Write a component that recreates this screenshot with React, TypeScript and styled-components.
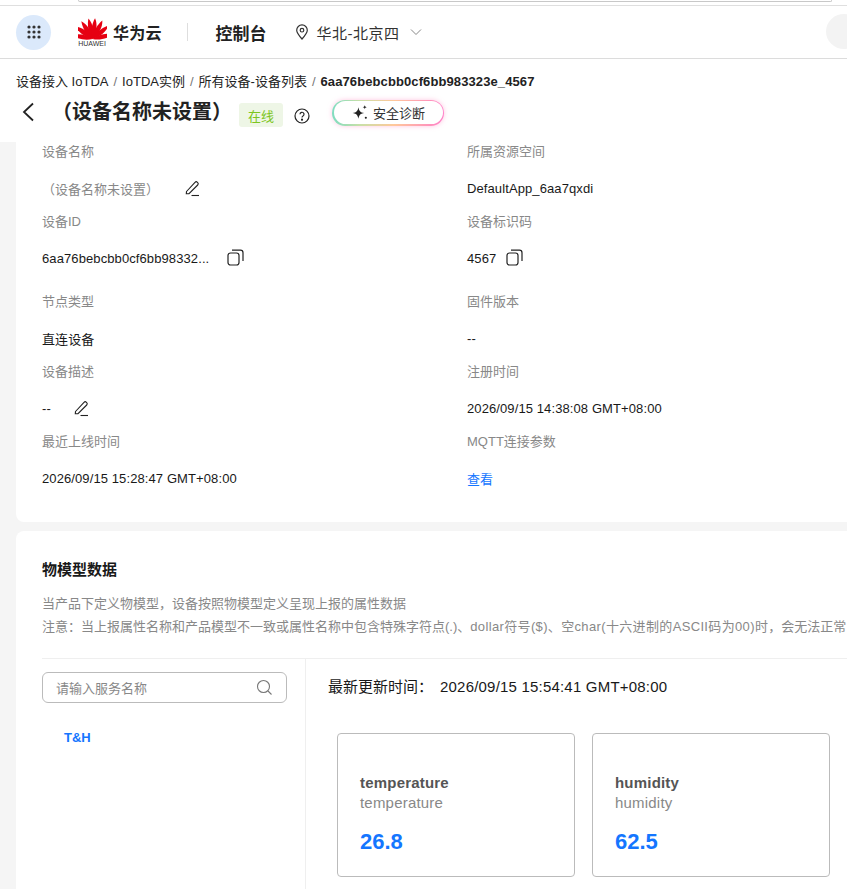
import React from "react";
import styled, { createGlobalStyle } from "styled-components";

const Global = createGlobalStyle`
  html, body { margin: 0; padding: 0; background: #fff; }
  body { font-family: "Liberation Sans", "Noto Sans CJK SC", sans-serif; color: #191919; }
  * { box-sizing: border-box; }
`;

const Page = styled.div`
  width: 847px;
  height: 889px;
  overflow: hidden;
  background: #f5f5f5;
  display: flex;
  flex-direction: column;
`;
const TopStrip = styled.div`
  height: 6px;
  flex: none;
  background: #fff;
  border-bottom: 1px solid #dfdfdf;
  padding-left: 78px;
  padding-right: 15px;
`;
const AddressEdge = styled.div`
  height: 2px;
  border: 1px solid #c8c8c8;
  border-top: none;
  border-radius: 0 0 5px 5px;
`;
const Header = styled.header`
  height: 53px;
  flex: none;
  background: #fff;
  border-bottom: 1px solid #dcdcdc;
  display: flex;
  align-items: center;
  padding-left: 16px;
  position: relative;
`;
const GridButton = styled.div`
  width: 35px;
  height: 35px;
  border-radius: 50%;
  background: #dbe9fb;
  display: flex;
  align-items: center;
  justify-content: center;
`;
const Logo = styled.div`
  margin-left: 26px;
  width: 30px;
  height: 32px;
  display: flex;
  flex-direction: column;
  align-items: center;
`;
const LogoWord = styled.span`
  font-size: 7px;
  line-height: 7px;
  color: #333;
  white-space: nowrap;
`;
const Brand = styled.span`
  margin-left: 6px;
  font-size: 16px;
  font-weight: 700;
  color: #222;
  letter-spacing: 0.2px;
`;
const HeaderDivider = styled.div`
  width: 1px;
  height: 18px;
  background: #dedede;
  margin-left: 25px;
`;
const Console = styled.span`
  margin-left: 28px;
  font-size: 17px;
  font-weight: 700;
  color: #222;
`;
const Region = styled.div`
  margin-left: 28px;
  display: flex;
  align-items: center;
  font-size: 15px;
  letter-spacing: 0.5px;
  color: #333;
`;
const RegionText = styled.span`
  margin-left: 8px;
  margin-right: 10px;
`;
const Avatar = styled.div`
  position: absolute;
  left: 826px;
  top: 8px;
  width: 36px;
  height: 35px;
  border-radius: 50%;
  background: #f3f3f3;
`;
const TitleArea = styled.div`
  height: 83px;
  flex: none;
  background: #fff;
  padding: 14px 16px 0;
`;
const Breadcrumb = styled.div`
  font-size: 13px;
  line-height: 18px;
  height: 18px;
  white-space: nowrap;
  color: #222;
`;
const Sep = styled.span`
  color: #777;
  margin: 0 5px;
`;
const CrumbStrong = styled.span`
  font-weight: 700;
  letter-spacing: 0.1px;
`;
const TitleRow = styled.div`
  display: flex;
  align-items: center;
  height: 32px;
  margin-top: 5px;
`;
const BackButton = styled.div`
  width: 30px;
  height: 24px;
  padding-left: 5px;
  display: flex;
  align-items: center;
`;
const Title = styled.h1`
  margin: 0 0 0 6px;
  font-size: 20px;
  line-height: 28px;
  font-weight: 700;
  color: #222;
  white-space: nowrap;
`;
const Badge = styled.span`
  margin-left: 7px;
  margin-top: 6px;
  width: 44px;
  height: 24px;
  border-radius: 3px;
  background: #eef6e6;
  color: #7cc520;
  font-size: 13px;
  display: flex;
  align-items: center;
  justify-content: center;
`;
const Help = styled.div`
  margin-left: 11px;
  margin-top: 7px;
  display: flex;
`;
const Glow = styled.div`
  margin-left: 22px;
  width: 112px;
  height: 26px;
  margin-top: 1px;
  border-radius: 13px;
  padding: 1.5px;
  background: linear-gradient(90deg, #7fdcc0 0%, #c8e0a8 25%, #ffc89a 55%, #ff7fc8 100%);
  box-shadow: 0 0 5px rgba(255, 150, 200, 0.55);
`;
const GlowInner = styled.div`
  width: 100%;
  height: 100%;
  background: #fff;
  border-radius: 12px;
  display: flex;
  align-items: center;
  justify-content: center;
  gap: 4px;
  font-size: 13px;
  color: #333;
`;
const Content = styled.main`
  flex: 1;
  padding-left: 16px;
  display: flex;
  flex-direction: column;
  gap: 9px;
  min-height: 0;
`;
const InfoCard = styled.section`
  width: 900px;
  height: 380px;
  flex: none;
  background: #fff;
  border-radius: 0 0 0 8px;
  padding: 1px 0 0 26px;
  display: grid;
  grid-template-columns: 425px 425px;
  grid-template-rows: 70px 80px 70px 70px 70px;
  align-content: start;
`;
const Field = styled.div`
  display: flex;
  flex-direction: column;
`;
const Label = styled.div`
  font-size: 13px;
  line-height: 18px;
  color: #888;
`;
const ValueRow = styled.div`
  margin-top: 18px;
  height: 18px;
  display: flex;
  align-items: center;
  font-size: 13px;
  letter-spacing: 0.1px;
  color: #191919;
  white-space: nowrap;
`;
const Muted = styled.span`
  color: #888;
  font-size: 13px;
  letter-spacing: 0;
`;
const IconSlot = styled.span<{ $gap: number; $lift: number }>`
  margin-left: ${(p) => p.$gap}px;
  margin-top: ${(p) => -p.$lift}px;
  display: inline-flex;
`;
const LinkText = styled.span`
  color: #1476ff;
  font-size: 13px;
`;
const ModelCard = styled.section`
  width: 900px;
  flex: 1;
  background: #fff;
  border-radius: 8px 0 0 0;
  padding: 29px 0 0 26px;
  display: flex;
  flex-direction: column;
  min-height: 0;
`;
const SectionTitle = styled.h2`
  margin: 0;
  font-size: 15px;
  line-height: 20px;
  font-weight: 700;
  color: #191919;
`;
const Desc = styled.p<{ $top: number }>`
  margin: ${(p) => p.$top}px 0 0;
  font-size: 13px;
  line-height: 18px;
  color: #888;
  white-space: nowrap;
`;
const DescWide = styled.span`
  letter-spacing: 0.35px;
`;
const ModelBody = styled.div`
  margin-top: 22px;
  border-top: 1px solid #efefef;
  display: flex;
  flex: 1;
  min-height: 0;
`;
const SideColumn = styled.aside`
  width: 264px;
  flex: none;
  border-right: 1px solid #efefef;
  padding-top: 13px;
`;
const SearchBox = styled.div`
  width: 245px;
  height: 31px;
  border: 1px solid #bbb;
  border-radius: 6px;
  padding: 0 13px;
  display: flex;
  align-items: center;
  justify-content: space-between;
  font-size: 13px;
  color: #888;
`;
const ServiceItem = styled.div`
  margin: 26px 0 0 22px;
  font-size: 13px;
  line-height: 18px;
  font-weight: 700;
  color: #1476ff;
`;
const MainColumn = styled.div`
  flex: 1;
  padding: 18px 0 0 22px;
`;
const UpdateLine = styled.div`
  display: flex;
  gap: 7px;
  font-size: 15px;
  line-height: 20px;
  color: #191919;
  white-space: nowrap;
`;
const UpdateDate = styled.span`
  letter-spacing: 0.2px;
`;
const MetricRow = styled.div`
  display: flex;
  gap: 17px;
  margin: 36px 0 0 9px;
`;
const Metric = styled.div`
  width: 238px;
  height: 144px;
  border: 1px solid #bbb;
  border-radius: 4px;
  padding: 39px 0 0 22px;
`;
const MetricName = styled.div`
  font-size: 15px;
  line-height: 20px;
  font-weight: 700;
  letter-spacing: 0.2px;
  color: #555;
`;
const MetricSub = styled.div`
  font-size: 15px;
  line-height: 20px;
  letter-spacing: 0.2px;
  color: #888;
`;
const MetricValue = styled.div`
  margin-top: 14px;
  font-size: 22px;
  line-height: 30px;
  font-weight: 700;
  color: #1476ff;
`;

const Pencil = () => (
  <svg width="17" height="17" viewBox="0 0 17 17" fill="none" stroke="#222" strokeWidth="1.1">
    <path d="M2.500 11.500 11 2.300a1.700 1.700 0 0 1 2.400 0l.3.300a1.700 1.700 0 0 1 0 2.400L5 13.700H2.300z" />
    <path d="M7.500 15.500h7.500" />
  </svg>
);
const Copy = () => (
  <svg width="17" height="17" viewBox="0 0 17 17" fill="none" stroke="#222" strokeWidth="1.200">
    <rect x="1" y="4" width="11" height="12" rx="2.500" />
    <path d="M5 1.200h8.500a2.500 2.500 0 0 1 2.500 2.500V12" />
  </svg>
);
const petals = [-78, -52, -30, -9, 9, 30, 52, 78];

const fields = [
  ["设备名称", "name", "所属资源空间", "DefaultApp_6aa7qxdi"],
  ["设备ID", "id", "设备标识码", "code"],
  ["节点类型", "直连设备", "固件版本", "--"],
  ["设备描述", "desc", "注册时间", "2026/09/15 14:38:08 GMT+08:00"],
  ["最近上线时间", "2026/09/15 15:28:47 GMT+08:00", "MQTT连接参数", "link"],
];

function renderValue(v: string) {
  if (v === "name")
    return (
      <>
        <Muted>（设备名称未设置）</Muted>
        <IconSlot $gap={25} $lift={0}><Pencil /></IconSlot>
      </>
    );
  if (v === "id")
    return (
      <>
        6aa76bebcbb0cf6bb98332...
        <IconSlot $gap={18} $lift={2}><Copy /></IconSlot>
      </>
    );
  if (v === "code")
    return (
      <>
        4567
        <IconSlot $gap={10} $lift={2}><Copy /></IconSlot>
      </>
    );
  if (v === "desc")
    return (
      <>
        --
        <IconSlot $gap={22} $lift={0}><Pencil /></IconSlot>
      </>
    );
  if (v === "link") return <LinkText>查看</LinkText>;
  return v;
}

export default function App() {
  return (
    <Page>
      <Global />
      <TopStrip><AddressEdge /></TopStrip>
      <Header>
        <GridButton>
          <svg width="14" height="14" viewBox="0 0 14 14" fill="#333">
            {[2, 7, 12].flatMap((y) =>
              [2, 7, 12].map((x) => <circle key={`${x}-${y}`} cx={x} cy={y} r="1.6" />)
            )}
          </svg>
        </GridButton>
        <Logo>
          <svg width="29" height="24" viewBox="0 0 58 46" fill="#e60012">
            {petals.map((a) => (
              <path key={a} transform={`rotate(${a} 29 45)`} d="M29 45C22 32 23 14 27.500 3c8 12 7 30 1.500 42z" />
            ))}
          </svg>
          <LogoWord>HUAWEI</LogoWord>
        </Logo>
        <Brand>华为云</Brand>
        <HeaderDivider />
        <Console>控制台</Console>
        <Region>
          <svg width="14" height="16" viewBox="0 0 14 16" fill="none" stroke="#333" strokeWidth="1.2">
            <path d="M7 15C3.500 11 1.700 8.600 1.700 6.200a5.300 5.300 0 0 1 10.600 0C12.300 8.600 10.500 11 7 15z" />
            <circle cx="7" cy="6.200" r="1.800" />
          </svg>
          <RegionText>华北-北京四</RegionText>
          <svg width="12" height="8" viewBox="0 0 12 8" fill="none" stroke="#888" strokeWidth="1">
            <path d="M1 1.500 6 6.500 11 1.500" />
          </svg>
        </Region>
        <Avatar />
      </Header>
      <TitleArea>
        <Breadcrumb>
          设备接入 IoTDA<Sep>/</Sep>IoTDA实例<Sep>/</Sep>所有设备-设备列表<Sep>/</Sep>
          <CrumbStrong>6aa76bebcbb0cf6bb983323e_4567</CrumbStrong>
        </Breadcrumb>
        <TitleRow>
          <BackButton>
            <svg width="14" height="20" viewBox="0 0 14 20" fill="none" stroke="#222" strokeWidth="1.8">
              <path d="M12 1.500 3 10l9 8.500" />
            </svg>
          </BackButton>
          <Title>（设备名称未设置）</Title>
          <Badge>在线</Badge>
          <Help>
            <svg width="16" height="16" viewBox="0 0 16 16" fill="none" stroke="#222" strokeWidth="1.200">
              <circle cx="8" cy="8" r="7" />
              <path d="M6 6.300a2 2 0 1 1 3 1.700c-.7.400-1 .800-1 1.600" />
              <circle cx="8" cy="11.700" r=".5" fill="#222" />
            </svg>
          </Help>
          <Glow>
            <GlowInner>
              <svg width="18" height="18" viewBox="0 0 17 17" fill="#222">
                <path d="M7 3c.6 3.600 1.800 4.900 5.500 5.500C8.800 9.100 7.600 10.400 7 14c-.6-3.600-1.800-4.900-5.500-5.500C5.200 7.900 6.400 6.600 7 3z" />
                <path d="M13 1c.2 1.300.7 1.800 2 2-1.300.2-1.800.7-2 2-.2-1.300-.7-1.800-2-2 1.300-.2 1.800-.7 2-2z" />
                <circle cx="14" cy="13" r="1" />
              </svg>
              安全诊断
            </GlowInner>
          </Glow>
        </TitleRow>
      </TitleArea>
      <Content>
        <InfoCard>
          {fields.flatMap(([l1, v1, l2, v2]) => [
            <Field key={l1}>
              <Label>{l1}</Label>
              <ValueRow>{renderValue(v1)}</ValueRow>
            </Field>,
            <Field key={l2}>
              <Label>{l2}</Label>
              <ValueRow>{renderValue(v2)}</ValueRow>
            </Field>,
          ])}
        </InfoCard>
        <ModelCard>
          <SectionTitle>物模型数据</SectionTitle>
          <Desc $top={15}>当产品下定义物模型，设备按照物模型定义呈现上报的属性数据</Desc>
          <Desc $top={5}>
            注意：当上报属性名称和产品模型不一致或属性名称中包含特殊字符点(.)、<DescWide>dollar符号($)、空char(十六进制的ASCII码为00)时</DescWide>，会无法正常
          </Desc>
          <ModelBody>
            <SideColumn>
              <SearchBox>
                请输入服务名称
                <svg width="17" height="17" viewBox="0 0 17 17" fill="none" stroke="#777" strokeWidth="1.100">
                  <circle cx="7.500" cy="7.500" r="6" />
                  <path d="M12 12l3.500 3.500" />
                </svg>
              </SearchBox>
              <ServiceItem>T&amp;H</ServiceItem>
            </SideColumn>
            <MainColumn>
              <UpdateLine>
                <span>最新更新时间：</span>
                <UpdateDate>2026/09/15 15:54:41 GMT+08:00</UpdateDate>
              </UpdateLine>
              <MetricRow>
                <Metric>
                  <MetricName>temperature</MetricName>
                  <MetricSub>temperature</MetricSub>
                  <MetricValue>26.8</MetricValue>
                </Metric>
                <Metric>
                  <MetricName>humidity</MetricName>
                  <MetricSub>humidity</MetricSub>
                  <MetricValue>62.5</MetricValue>
                </Metric>
              </MetricRow>
            </MainColumn>
          </ModelBody>
        </ModelCard>
      </Content>
    </Page>
  );
}
